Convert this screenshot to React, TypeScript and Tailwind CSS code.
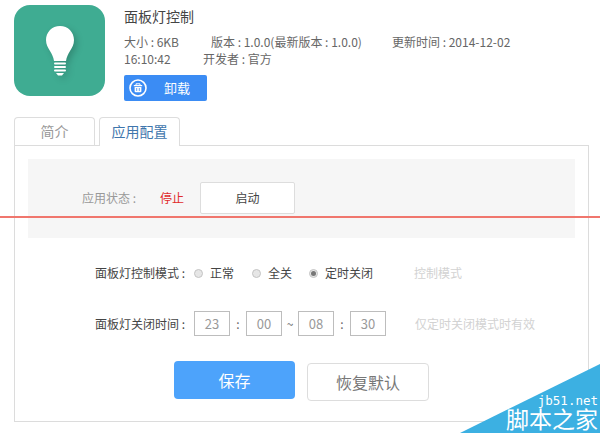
import React from "react";

const Radio: React.FC<{ label: string; checked?: boolean }> = ({ label, checked }) => {
  return (
    <label className="flex items-center gap-[7px] text-[12px] text-[#444]">
      <span className="w-[9px] h-[9px] rounded-full border border-[#c4c4c4] bg-[#e6e6e6] flex items-center justify-center">
        {checked && <span className="w-[5px] h-[5px] rounded-full bg-[#777]" />}
      </span>
      {label}
    </label>
  );
};

const TimeBox: React.FC<{ value: string }> = ({ value }) => {
  return (
    <div className="w-[36px] h-[25px] pt-[1px] border border-[#bdbdbd] flex items-center justify-center text-[13px] text-[#999]">
      {value}
    </div>
  );
};

export default function App() {
  return (
    <div className="relative w-[600px] h-[433px] overflow-hidden bg-white font-['Noto_Sans_CJK_SC',sans-serif]">
      {/* app info */}
      <div className="flex gap-[19px] pl-[14px] pt-[5px] h-[117px]">
        <div className="w-[91px] h-[91px] rounded-[16px] bg-[#3fac92] flex items-center justify-center">
          <svg className="drop-shadow-[3px_3px_3px_rgba(0,0,0,0.18)]" width="28" height="50" viewBox="0 0 28 50">
            <path d="M14 0C6 0 0 6.200 0 14c0 4.500 2 7.500 4 11 1.800 3 3.500 6 4 10h12c.5-4 2.200-7 4-10 2-3.500 4-6.500 4-11C28 6.200 22 0 14 0z" fill="#fff" />
            <rect x="8" y="36.500" width="12" height="2" rx="1" fill="#fff" />
            <rect x="8" y="40" width="12" height="2" rx="1" fill="#fff" />
            <rect x="8" y="43.500" width="12" height="2" rx="1" fill="#fff" />
            <path d="M10 47h8l-2 2.500h-4z" fill="#fff" />
          </svg>
        </div>
        <div className="flex flex-col">
          <div className="text-[14px] leading-[22px] text-[#444]">面板灯控制</div>
          <div className="flex text-[12px] leading-[17px] text-[#666] mt-[6px]">
            <span className="w-[87px]">大小 : 6KB</span>
            <span className="w-[181px]">版本 : 1.0.0(最新版本 : 1.0.0)</span>
            <span>更新时间 : 2014-12-02</span>
          </div>
          <div className="flex text-[12px] leading-[17px] text-[#666]">
            <span className="w-[79px]">16:10:42</span>
            <span>开发者 : 官方</span>
          </div>
          <button className="mt-[8px] w-[83px] h-[26px] rounded-[2px] bg-[#3b8cf4] flex items-center pl-[5px] text-[13px] text-white">
            <svg width="18" height="18" viewBox="0 0 18 18" fill="none">
              <circle cx="9" cy="9" r="8" stroke="#fff" strokeWidth="1.600" />
              <path d="M7 6V4.800h4V6" stroke="#fff" strokeWidth="1" />
              <path d="M4.800 6h8.400v1.200H4.800zM5.600 8h6.800v4.200a1 1 0 0 1-1 1H6.600a1 1 0 0 1-1-1z" fill="#fff" />
              <path d="M7.700 9v3M10.300 9v3" stroke="#3b8cf4" strokeWidth="0.800" />
            </svg>
            <span className="ml-[17px]">卸载</span>
          </button>
        </div>
      </div>

      {/* tabs */}
      <div className="flex gap-[4px] pl-[14px] relative z-10 mb-[-1px]">
        <div className="w-[81px] h-[29px] pb-[2px] border border-b-0 border-[#ddd] rounded-t-[4px] flex items-center justify-center text-[14px] text-[#999]">
          简介
        </div>
        <div className="w-[81px] h-[29px] pb-[2px] border border-b-0 border-[#ddd] rounded-t-[4px] bg-white flex items-center justify-center text-[14px] text-[#3f76ad]">
          应用配置
        </div>
      </div>

      {/* config panel */}
      <div className="ml-[14px] w-[575px] h-[277px] border border-[#dcdcdc] pt-[13px] px-[13px]">
        <div className="h-[79px] bg-[#f6f6f6] flex items-center pl-[54px] text-[12px] pb-[1px]">
          <span className="w-[78px] text-[#999]">应用状态 :</span>
          <span className="w-[40px] text-[#e02b2b]">停止</span>
          <div className="w-[95px] h-[32px] bg-white border border-[#ddd] rounded-[2px] flex items-center justify-center text-[#444]">
            启动
          </div>
        </div>

        <div className="flex items-center mt-[26px] h-[18px] pl-[67px] text-[12px] text-[#444]">
          <span className="w-[99px]">面板灯控制模式 :</span>
          <div className="w-[58px]"><Radio label="正常" /></div>
          <div className="w-[57px]"><Radio label="全关" /></div>
          <div className="w-[105px]"><Radio label="定时关闭" checked /></div>
          <span className="text-[#d2d2d2]">控制模式</span>
        </div>

        <div className="flex items-center mt-[29px] pl-[67px] text-[12px] text-[#444]">
          <span className="w-[99px] pt-[1px]">面板灯关闭时间 :</span>
          <TimeBox value="23" />
          <span className="w-[16px] text-center text-[#666]">:</span>
          <TimeBox value="00" />
          <span className="w-[16px] text-center text-[#666]">~</span>
          <TimeBox value="08" />
          <span className="w-[16px] text-center text-[#666]">:</span>
          <TimeBox value="30" />
          <span className="ml-[29px] pt-[1px] text-[#d2d2d2]">仅定时关闭模式时有效</span>
        </div>

        <div className="flex items-start gap-[12px] mt-[25px] pl-[146px]">
          <button className="w-[121px] h-[38px] rounded-[4px] bg-[#4da3fb] text-[16px] text-white">保存</button>
          <button className="mt-[2px] w-[122px] h-[38px] rounded-[4px] bg-white border border-[#ddd] text-[16px] text-[#777]">恢复默认</button>
        </div>
      </div>

      {/* red guide line over the page */}
      <div className="absolute left-0 top-[216px] w-full h-[2px] bg-[#f0766d]" />

      {/* watermark */}
      <svg className="absolute right-0 bottom-0" width="140" height="69" viewBox="0 0 140 69">
        <polygon points="0,69 140,0 140,69" fill="#3cb0e2" />
      </svg>
      <div className="absolute right-[2px] top-[394px] font-['DejaVu_Sans_Mono',monospace] text-[12.5px] leading-[13px] text-white">jb51.net</div>
      <div className="absolute right-[2px] top-[408px] font-['Liberation_Sans','Noto_Sans_CJK_SC',sans-serif] text-[23px] leading-[24px] text-white">脚本之家</div>
    </div>
  );
}
